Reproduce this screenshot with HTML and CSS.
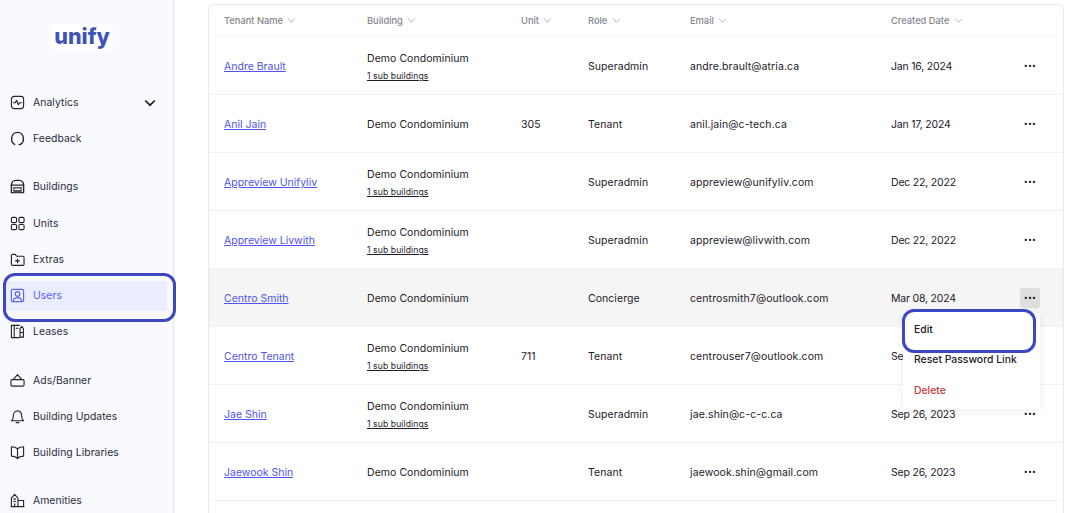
FILE: index.html
```html
<!DOCTYPE html>
<html lang="en">
<head>
<meta charset="utf-8">
<title>Users</title>
<link rel="stylesheet" href="styles.css">
</head>
<body>
<div class="app">
  <aside class="sidebar">
    <div class="logo"><span class="logo-text">unify</span></div>
    <nav class="nav">
      <div class="nav-group">
        <a class="nav-item"><svg class="ico" viewBox="0 0 16 16"><rect x="1.500" y="1.500" width="13" height="13" rx="3"/><path d="M3.500 8.300h2.200l1.300-2.600 2 4.600 1.300-2h2.200"/></svg><span>Analytics</span><svg class="caret" viewBox="0 0 12 8"><path d="M1.200 1.500 6 6.200l4.800-4.700"/></svg></a>
        <a class="nav-item"><svg class="ico bold" viewBox="0 0 16 16"><path d="M5 14.300C3 13.300 1.700 11.200 1.700 8.200 1.700 4.400 4.300 1.500 8 1.500s6.300 2.900 6.300 6.700c0 3-1.300 5.100-3.300 6.100"/><path d="M11 14.300c-.4.100-.8.200-1.300.2"/></svg><span>Feedback</span></a>
      </div>
      <div class="nav-group">
        <a class="nav-item"><svg class="ico bold" viewBox="0 0 16 16"><path d="M1.500 14.500V6.500C1.500 3.500 3.500 1.500 6 1.500h4c2.500 0 4.500 2 4.500 5v8z"/><path d="M1.500 6.500h13"/><path class="fill" d="M3.500 8.500h9v6h-9z"/><path class="cut" d="M5.500 11h5"/></svg><span>Buildings</span></a>
        <a class="nav-item"><svg class="ico" viewBox="0 0 16 16"><rect x="1.500" y="1.500" width="5.500" height="5.500" rx="1.300"/><rect x="9.500" y="1.500" width="5.500" height="5.500" rx="1.300"/><rect x="1.500" y="9" width="5.500" height="5.500" rx="1.300"/><rect x="9.500" y="9" width="5.500" height="5.500" rx="1.300"/></svg><span>Units</span></a>
        <a class="nav-item"><svg class="ico" viewBox="0 0 16 16"><path d="M1.500 13V4c0-.8.500-1.500 1.300-1.500h2.700l1.500 2h6.700c.8 0 1.300.6 1.300 1.400V13c0 .8-.5 1.300-1.300 1.300H2.800c-.8 0-1.300-.5-1.300-1.300z"/><path d="M8 7.500v4M6 9.500h4"/></svg><span>Extras</span></a>
        <a class="nav-item active"><svg class="ico" viewBox="0 0 16 16"><rect x="1.500" y="1.500" width="13" height="13" rx="1.500"/><circle cx="8" cy="6.300" r="2.500"/><path d="M3.500 14c.3-2.500 2-3.700 4.500-3.700s4.200 1.200 4.500 3.700"/></svg><span>Users</span></a>
        <a class="nav-item"><svg class="ico" viewBox="0 0 16 16"><path d="M10 14.500H1.500V1.500H10M4.500 1.500v13M6.500 4.500h2"/><path d="M12.500 2.500l1.800 2.500v9h-3.600V5zM10.700 9h3.600"/></svg><span>Leases</span></a>
      </div>
      <div class="nav-group">
        <a class="nav-item"><svg class="ico" viewBox="0 0 16 16"><path d="M2 7h12c.5 0 1 .4 1 1v4.500c0 .8-.5 1.500-1.300 1.500H2.300C1.500 14 1 13.300 1 12.500V8c0-.6.500-1 1-1z"/><path d="M3.500 7 8 1.800 12.500 7"/></svg><span>Ads/Banner</span></a>
        <a class="nav-item"><svg class="ico" viewBox="0 0 16 16"><path d="M1.500 12.500c1.300-1 2-2 2-4.500 0-3.500 1.800-6 4.500-6s4.500 2.500 4.500 6c0 2.500.7 3.500 2 4.500z"/><path d="M6.500 14.500h3"/></svg><span>Building Updates</span></a>
        <a class="nav-item"><svg class="ico" viewBox="0 0 16 16"><path d="M8 4C6.500 2.500 4 1.800 1.500 1.800v10c2.500 0 5 .7 6.500 2.700 1.500-2 4-2.700 6.500-2.700v-10C12 1.800 9.500 2.500 8 4zM8 4v10.500"/></svg><span>Building Libraries</span></a>
      </div>
      <div class="nav-group">
        <a class="nav-item"><svg class="ico" viewBox="0 0 16 16"><path d="M1.500 14.500V5.500L5 1.500l3.500 4v9zM8.500 8h6v6.500h-6M1 14.500h14"/><path d="M4 6.500h2M4 9h2M5 11.500v3"/></svg><span>Amenities</span></a>
      </div>
    </nav>
    <div class="callout callout-users"></div>
  </aside>
  <main class="main">
    <section class="card">
      <table class="users">
        <colgroup>
          <col class="c-name"><col class="c-building"><col class="c-unit"><col class="c-role"><col class="c-email"><col class="c-date"><col>
        </colgroup>
        <thead>
          <tr>
            <th>Tenant Name <svg class="sort" viewBox="0 0 10 6"><path d="M1 1l4 4 4-4"/></svg></th>
            <th>Building <svg class="sort" viewBox="0 0 10 6"><path d="M1 1l4 4 4-4"/></svg></th>
            <th>Unit <svg class="sort" viewBox="0 0 10 6"><path d="M1 1l4 4 4-4"/></svg></th>
            <th>Role <svg class="sort" viewBox="0 0 10 6"><path d="M1 1l4 4 4-4"/></svg></th>
            <th>Email <svg class="sort" viewBox="0 0 10 6"><path d="M1 1l4 4 4-4"/></svg></th>
            <th>Created Date <svg class="sort" viewBox="0 0 10 6"><path d="M1 1l4 4 4-4"/></svg></th>
            <th></th>
          </tr>
        </thead>
        <tbody>
          <tr>
            <td><a class="name">Andre Brault</a></td>
            <td>Demo Condominium<a class="sub">1 sub buildings</a></td>
            <td></td><td>Superadmin</td><td class="email">andre.brault@atria.ca</td><td class="date">Jan 16, 2024</td>
            <td class="act"><span class="more">•••</span></td>
          </tr>
          <tr>
            <td><a class="name">Anil Jain</a></td>
            <td>Demo Condominium</td>
            <td>305</td><td>Tenant</td><td class="email">anil.jain@c-tech.ca</td><td class="date">Jan 17, 2024</td>
            <td class="act"><span class="more">•••</span></td>
          </tr>
          <tr>
            <td><a class="name">Appreview Unifyliv</a></td>
            <td>Demo Condominium<a class="sub">1 sub buildings</a></td>
            <td></td><td>Superadmin</td><td class="email">appreview@unifyliv.com</td><td class="date">Dec 22, 2022</td>
            <td class="act"><span class="more">•••</span></td>
          </tr>
          <tr>
            <td><a class="name">Appreview Livwith</a></td>
            <td>Demo Condominium<a class="sub">1 sub buildings</a></td>
            <td></td><td>Superadmin</td><td class="email">appreview@livwith.com</td><td class="date">Dec 22, 2022</td>
            <td class="act"><span class="more">•••</span></td>
          </tr>
          <tr class="hover">
            <td><a class="name">Centro Smith</a></td>
            <td>Demo Condominium</td>
            <td></td><td>Concierge</td><td class="email">centrosmith7@outlook.com</td><td class="date">Mar 08, 2024</td>
            <td class="act">
              <span class="more open">•••</span>
              <div class="menu">
                <div class="menu-item">Edit</div>
                <div class="menu-item">Reset Password Link</div>
                <div class="menu-item danger">Delete</div>
                <div class="callout callout-edit"></div>
              </div>
            </td>
          </tr>
          <tr>
            <td><a class="name">Centro Tenant</a></td>
            <td>Demo Condominium<a class="sub">1 sub buildings</a></td>
            <td>711</td><td>Tenant</td><td class="email">centrouser7@outlook.com</td><td class="date">Sep 26, 2023</td>
            <td class="act"><span class="more">•••</span></td>
          </tr>
          <tr>
            <td><a class="name">Jae Shin</a></td>
            <td>Demo Condominium<a class="sub">1 sub buildings</a></td>
            <td></td><td>Superadmin</td><td class="email">jae.shin@c-c-c.ca</td><td class="date">Sep 26, 2023</td>
            <td class="act"><span class="more">•••</span></td>
          </tr>
          <tr>
            <td><a class="name">Jaewook Shin</a></td>
            <td>Demo Condominium</td>
            <td></td><td>Tenant</td><td class="email">jaewook.shin@gmail.com</td><td class="date">Sep 26, 2023</td>
            <td class="act"><span class="more">•••</span></td>
          </tr>
        </tbody>
      </table>
    </section>
  </main>
</div>
</body>
</html>
```
FILE: styles.css
```css
* { box-sizing: border-box; }
html, body { margin: 0; height: 100%; overflow: hidden; background: #fff; }
body { font-family: Inter, "Noto Sans", sans-serif; color: #1c1e2b; }

.app { display: flex; height: 513px; overflow: hidden; }

.sidebar {
  position: relative;
  flex: 0 0 174px;
  background: #f9faff;
  border-right: 1px solid #e4e5ea;
  padding: 24px 6px 0;
  z-index: 2;
}
.logo { display: flex; justify-content: center; margin-right: 9px; }
.logo-text {
  display: block;
  width: 62px;
  height: 26px;
  background: #fff;
  color: #3f52b8;
  font: 800 21.500px/25px Inter, sans-serif;
  letter-spacing: 0;
  text-align: center;
}
.nav { margin-top: 37.600px; display: flex; flex-direction: column; gap: 18.100px; }
.nav-group { display: flex; flex-direction: column; gap: 6.250px; }
.nav-item {
  display: flex;
  align-items: center;
  gap: 8px;
  height: 30px;
  padding-left: 4px;
  font-size: 10.400px;
  letter-spacing: .05px;
  color: #2a2c38;
  border-radius: 3px;
}
.nav-item.active { background: #eaedfe; color: #5a63f0; }
.ico {
  width: 15px;
  height: 15px;
  flex: none;
  fill: none;
  stroke: currentColor;
  stroke-width: 1.200;
  stroke-linejoin: round;
  stroke-linecap: round;
}
.ico.bold { stroke-width: 1.500; }
.nav-item:not(.active) .ico { color: #22242e; }
.ico .fill { fill: #55575f; stroke: none; }
.ico .cut { stroke: #f9faff; }
.caret {
  width: 12px;
  height: 8px;
  margin-left: auto;
  margin-right: 11px;
  fill: none;
  stroke: #1b1c22;
  stroke-width: 1.700;
}
.callout {
  position: absolute;
  border: 3px solid #3d47c4;
  border-radius: 12px;
  pointer-events: none;
}
.callout-users { left: 3px; top: 273px; width: 173px; height: 49px; }

.main { flex: 1; min-width: 0; padding: 4px 6px 0 34px; overflow: hidden; }
.card {
  border: 1px solid #e8e8ea;
  border-radius: 5px;
  padding-bottom: 60px;
  background: #fff;
}
.users { width: 100%; border-collapse: collapse; table-layout: fixed; font-size: 10.500px; }
.c-name { width: 158px; }
.c-building { width: 154px; }
.c-unit { width: 67px; }
.c-role { width: 102px; }
.c-email { width: 201px; }
.c-date { width: 120px; }
.users th {
  height: 31px;
  padding: 1px 0 0;
  text-align: left;
  font-weight: 500;
  font-size: 9.300px;
  letter-spacing: 0;
  color: #84868e;
  border-bottom: 1px solid #f6f6f7;
}
.users td {
  height: 58px;
  padding: 4px 0 0;
  line-height: 14px;
  letter-spacing: .05px;
  color: #1e2028;
  border-bottom: 1px solid #f1f1f3;
}
.users th:first-child, .users td:first-child { padding-left: 15px; }
.users td.email { letter-spacing: .1px; }
.users td.date { letter-spacing: -.2px; }
.sort { width: 9px; height: 5px; margin-left: 2px; vertical-align: 1px; fill: none; stroke: #9b9da4; stroke-width: 1; }
.name { color: #4f55ee; text-decoration: underline; letter-spacing: 0; }
.sub {
  display: block;
  margin-top: 4px;
  font-size: 8.600px;
  line-height: 12px;
  color: #1e2028;
  text-decoration: underline;
  letter-spacing: .1px;
}
.hover td { background: #f5f5f5; }
.act { position: relative; }
.users td.act { padding: 2px 23px 0 0; text-align: right; }
.more {
  display: inline-block;
  width: 20px;
  height: 20px;
  border-radius: 3px;
  font-size: 7px;
  line-height: 20px;
  letter-spacing: .3px;
  text-align: center;
  color: #15161c;
}
.more.open { background: #dedede; }
.menu {
  position: absolute;
  top: 43px;
  right: 23px;
  width: 137px;
  height: 97px;
  background: #fff;
  border-radius: 4px;
  box-shadow: 0 2px 10px rgba(0, 0, 0, .07);
  padding-top: 3px;
  text-align: left;
  z-index: 3;
}
.menu-item { height: 30.500px; line-height: 30.500px; padding-left: 11px; font-size: 10.400px; font-weight: 500; letter-spacing: 0; color: #1e2028; }
.menu-item.danger { color: #c63a3a; }
.callout-edit { left: -1px; top: -3px; width: 134px; height: 44px; }
```
